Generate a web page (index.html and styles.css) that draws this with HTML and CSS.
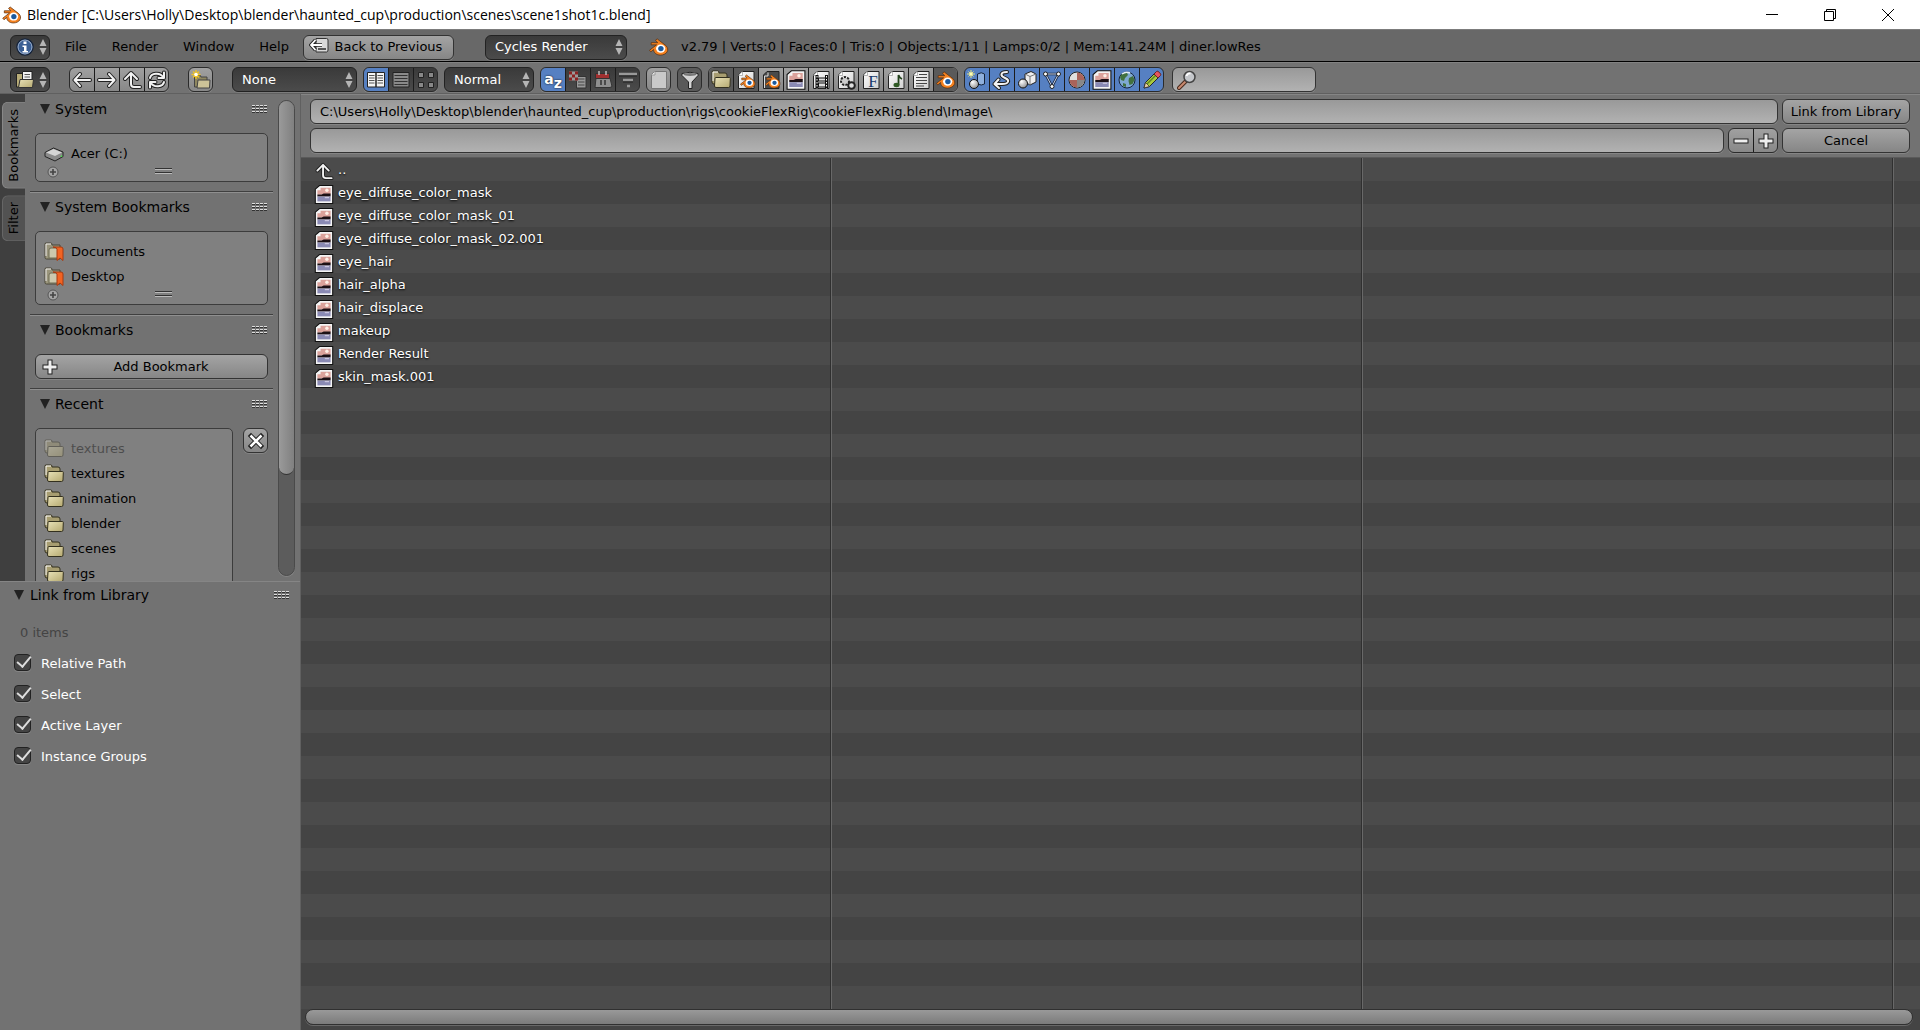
FILE: index.html
```html
<!DOCTYPE html>
<html lang="en">
<head>
<meta charset="utf-8">
<title>Blender</title>
<link rel="stylesheet" href="styles.css">
</head>
<body>
<svg class="sprite" width="0" height="0" aria-hidden="true">
  <defs>
    <linearGradient id="g-folder" x1="0" y1="0" x2="1" y2="1"><stop offset="0" stop-color="#e9e2b8"/><stop offset="1" stop-color="#b5a970"/></linearGradient>
    <linearGradient id="g-page" x1="0" y1="0" x2="1" y2="1"><stop offset="0" stop-color="#ffffff"/><stop offset="1" stop-color="#cfcfcf"/></linearGradient>
    <radialGradient id="g-ball" cx=".35" cy=".3" r=".8"><stop offset="0" stop-color="#fff"/><stop offset="1" stop-color="#888"/></radialGradient>
  </defs>
  <symbol id="logo" viewBox="1 2 18.500 17">
    <path d="M1.500 13.500 8 8.500H3V6.500h6L7 4.200 8.600 3l8 6.200c4 4 .6 8.800-5 8.800-4 0-6.500-2.600-6.300-5.200L2.700 15z" fill="#f58220" stroke="#5a3010" stroke-width=".7"/>
    <ellipse cx="11.800" cy="12" rx="4.300" ry="3.800" fill="#fff"/><circle cx="12" cy="12" r="2.500" fill="#1c5a9e"/>
  </symbol>
  <symbol id="updown" viewBox="0 0 8 18"><path d="M4 1 7.500 8h-7zM4 17 .5 10h7z" fill="#b5b5b5"/></symbol>
  <symbol id="info" viewBox="0 0 20 20"><circle cx="10" cy="10" r="8" fill="#3b5f94" stroke="#15233a" stroke-width="1.500"/><circle cx="10" cy="10" r="7" fill="none" stroke="#9fb4d2"/><path d="M8.500 4.500h3v2.500h-3zM7.500 8.500h4V14H13v1.500H7.500V14H9v-4H7.500z" fill="#fff"/></symbol>
  <symbol id="back" viewBox="0 0 20 20"><path d="M7 1.500h10.500q1.500 0 1.500 1.500v10q0 2-1.500 2H7z" fill="#d9d9d9" stroke="#333"/><path d="M9 12h8" stroke="#555" stroke-width="2"/><path d="M6.500 3 2 8l4.500 5M2.500 8H13" fill="none" stroke="#222" stroke-width="3.600"/><path d="M6.500 3 2 8l4.500 5M2.500 8H13" fill="none" stroke="#fff" stroke-width="1.800"/></symbol>
  <symbol id="filebrowser" viewBox="0 0 20 20"><path d="M1.500 17V3.500H7l1 2h4V17z" fill="#b9ad78" stroke="#222"/><path d="M7.500 1.500H17V13H7.500z" fill="#f2f2f2" stroke="#222"/><path d="M9.500 4.500H15m-5.500 2.500H15" stroke="#555"/><path d="M5 9.500h13.500l-1 8H3.500z" fill="url(#g-folder)" stroke="#333"/></symbol>
  <symbol id="left" viewBox="0 0 20 20"><path class="ink" d="M8 4 2.500 10 8 16M3 10h15"/><path class="lit" d="M8 4 2.500 10 8 16M3 10h15"/></symbol>
  <symbol id="right" viewBox="0 0 20 20"><path class="ink" d="m12 4 5.500 6-5.500 6M17 10H2"/><path class="lit" d="m12 4 5.500 6-5.500 6M17 10H2"/></symbol>
  <symbol id="up" viewBox="0 0 20 20"><path class="ink" d="m3 9 6-6 6 6M9 4v10q0 3 3 3h6"/><path class="lit" d="m3 9 6-6 6 6M9 4v10q0 3 3 3h6"/></symbol>
  <symbol id="reload" viewBox="0 0 20 20"><path class="ink" d="M3 8c1-5 10-6 13-1M11.500 8H17V2.500M17 12c-1 5-10 6-13 1M8.500 12H3v5.500"/><path class="lit" d="M3 8c1-5 10-6 13-1M11.500 8H17V2.500M17 12c-1 5-10 6-13 1M8.500 12H3v5.500"/></symbol>
  <symbol id="newfolder" viewBox="0 0 20 20"><path d="M3.500 17V5H9l1 2h6v10z" fill="#8f875f" stroke="#444"/><path d="M7 10h12l-.5 8H6z" fill="#cdc398" stroke="#444"/><path d="M5 0v9M.5 4.500h9M2 1.500l6 6M8 1.500l-6 6" stroke="#f2c522" stroke-width="1.400"/><circle cx="5" cy="4.500" r="1.800" fill="#fff"/></symbol>
  <symbol id="folder" viewBox="0 0 20 20"><path d="M1 2q0-1 1-1h5q1 0 1 2h6q2 0 2 2v9H3q-2 0-2-2z" fill="#a79d70" stroke="#33301f"/><path d="M2 11V2h5" fill="none" stroke="#fff"/><path d="M5 7.500h13.500q.8 0 .8 1l-.3 7.500q0 1.500-1.500 1.500H5q-1.500 0-1.500-1.500l.5-7.500q0-1 1-1z" fill="url(#g-folder)" stroke="#33301f"/></symbol>
  <symbol id="bookfolder" viewBox="0 0 20 20"><path d="M1 2q0-1 1-1h5q1 0 1 2h8v14H2.500Q1 17 1 15.500z" fill="#9a957c" stroke="#4a4738"/><path d="M2 14V2h5" fill="none" stroke="#eee"/><path d="M5 16V8q0-2 2-2h10v10z" fill="#ccc8ad" stroke="#6d6a55"/><path d="M9 5h8q2 0 2 2v11.500l-3-2.500-3 2.500V7q0-1.500-4-2z" fill="#f26322" stroke="#a63a10"/></symbol>
  <symbol id="longlist" viewBox="0 0 20 20"><path d="M1.500 2.500H10V17H1.500zM10 2.500h8.500V17H10z" fill="#f4f4f4" stroke="#222"/><path d="M3 5.500h5.500M3 8h5.500M3 10.500h5.500M3 13h5.500m3-7.500H17M11.500 8H17m-5.500 2.500H17M11.500 13H17" stroke="#555"/></symbol>
  <symbol id="lines" viewBox="0 0 20 20"><path d="M2 2.500h16V17H2z" fill="#8a8a8a" stroke="#222"/><path d="M3.500 5.500h13m-13 3h13m-13 3h13m-13 3h13" stroke="#333"/></symbol>
  <symbol id="thumbs" viewBox="0 0 20 20"><path d="M2.500 2.500h5v5h-5zm10 0h5v5h-5zm-10 10h5v5h-5zm10 0h5v5h-5z" fill="#888" stroke="#222"/></symbol>
  <symbol id="byext" viewBox="0 0 20 20"><path d="M8.500 6.500H18V18H8.500z" fill="#999" stroke="#333"/><path d="M10 9h6.500M10 12h6.500M10 15h6.500" stroke="#444"/><path d="M1 1.500h9v9H1z" fill="#999"/><path d="M1 1.500h3v3H1zm6 0h3v3H7zm-3 3h3v3H4zm-3 3h3v3H1zm6 0h3v3H7z" fill="#8c2222"/></symbol>
  <symbol id="calendar" viewBox="0 0 20 20"><path d="m3 8-1 9.500h15l2-1-2-8.500z" fill="#8f8f8f" stroke="#333"/><path d="M2.500 3.500h14v5h-14z" fill="#a03030" stroke="#333"/><path d="M6 1v4m7-4v4" stroke="#bbb" stroke-width="1.500"/><path d="M8 10v5m4-5v5" stroke="#333" stroke-width="1.500"/></symbol>
  <symbol id="size" viewBox="0 0 20 20"><path d="M1 4h18M5 10h10M9 16h3" stroke="#999" stroke-width="2.500"/><path d="M1 6h18M5 12h10" stroke="#222"/></symbol>
  <symbol id="blank" viewBox="0 0 20 20"><path d="M5.500 1.500H17.500v17h-15V4.500z" fill="#c9c9c9" stroke="#777"/><path d="M2.500 5H6V1.500" fill="#eee" stroke="#999"/></symbol>
  <symbol id="funnel" viewBox="0 0 20 20"><path d="M2 3.500q8-2.500 16 0v2L12 12v6.500H8.500V12L2 5.500z" fill="#d4d4d4" stroke="#222"/><ellipse cx="10" cy="4.500" rx="6.500" ry="1.400" fill="#777"/></symbol>
  <symbol id="page" viewBox="0 0 20 20"><path d="M6 1.500h12v17H2.500V5z" fill="url(#g-page)" stroke="#222"/><path d="M2.500 5.500H6.500v-4" fill="#fff" stroke="#999" stroke-width=".7"/></symbol>
  <symbol id="blend" viewBox="0 0 20 20"><use href="#page"/><use href="#logo" x="4" y="4" width="16" height="15"/></symbol>
  <symbol id="backup" viewBox="0 0 20 20"><path d="M6 1.500h12v17H2.500V5z" fill="#4a4a4a" stroke="#222"/><path d="M3.500 18V6H7V2.500" fill="none" stroke="#ddd"/><use href="#logo" x="4" y="4" width="16" height="15"/></symbol>
  <symbol id="image" viewBox="1 1 18.500 18"><path d="M6 1.500h12.500v17H2V5z" fill="#f4f4f4" stroke="#111"/><path d="M4 6h3V3.500h9.500V10H4z" fill="#dba29b"/><circle cx="13" cy="6" r="1.600" fill="#fff0e6"/><path d="M4 10h4l2-1h6.500v3H4z" fill="#1c1015"/><path d="M4 12h12.500v4.500H4z" fill="#8a8ab4"/><path d="M11 13h4" stroke="#d4cfe6"/></symbol>
  <symbol id="movie" viewBox="0 0 20 20"><use href="#page"/><path d="M6 5v13.500M15.500 5v13.500" stroke="#111" stroke-width="3"/><path d="M7.500 8h7v3h-7zm0 5h7v4h-7z" fill="#ddd" stroke="#111"/><path d="M6 6v12.500M15.500 6v12.500" stroke="#fff" stroke-dasharray="1.500 1.500"/></symbol>
  <symbol id="script" viewBox="0 0 20 20"><use href="#page"/><circle cx="9" cy="11" r="3.500" fill="none" stroke="#222" stroke-width="3" stroke-dasharray="2 1"/><circle cx="9" cy="11" r="3" fill="#ccc"/><circle cx="15.500" cy="15.500" r="3.300" fill="#ddd" stroke="#222" stroke-width="2"/></symbol>
  <symbol id="sound" viewBox="0 0 20 20"><use href="#page"/><path d="M12.500 15V5q1 3 3.500 4" fill="none" stroke="#23421c" stroke-width="1.800"/><ellipse cx="10.500" cy="15" rx="3" ry="2.200" fill="#2f5a24"/></symbol>
  <symbol id="text" viewBox="0 0 20 20"><use href="#page"/><path d="M8 4.500h8M5 7.500h11M5 10.500h11M5 13.500h11M5 16h8" stroke="#444"/></symbol>
  <symbol id="objects" viewBox="0 0 20 20"><path d="M10.500 4q4-2.500 7 0v10q-3 2-7 0z" fill="#8fb0dd" stroke="#15233a"/><circle cx="7" cy="14" r="4.500" fill="url(#g-ball)" stroke="#111"/><path d="M4 0v8M0 4h8M1.500 1.500l5 5M6.500 1.500l-5 5" stroke="#e8e27a"/><circle cx="4" cy="4" r="1.700" fill="#ffffb0"/></symbol>
  <symbol id="curve" viewBox="0 0 20 20"><path class="ink" d="M15 2c-7 0-7 4-2 6s4 6-3 6H2.500M6.500 9.500 2.500 14l4.500 4"/><path class="lit" d="M15 2c-7 0-7 4-2 6s4 6-3 6H2.500M6.500 9.500 2.500 14l4.500 4"/></symbol>
  <symbol id="geometry" viewBox="0 0 20 20"><path d="m8 4 6-2.500L19 4v8l-6 3-5-3z" fill="#eee" stroke="#222"/><path d="m8 4 5 2.500V15m0-8.500L19 4" fill="none" stroke="#777"/><circle cx="6" cy="13.500" r="4.500" fill="url(#g-ball)" stroke="#111"/></symbol>
  <symbol id="mesh" viewBox="0 0 20 20"><path d="M3.500 4h13L10 16.500z" fill="none" stroke="#17243c" stroke-width="2.500"/><path d="M3.500 4h13L10 16.500z" fill="none" stroke="#ccd8ee"/><g fill="#fff" stroke="#222"><circle cx="3.500" cy="4" r="2"/><circle cx="16.500" cy="4" r="2"/><circle cx="10" cy="16.500" r="2"/></g></symbol>
  <symbol id="material" viewBox="0 0 20 20"><circle cx="10" cy="10" r="8" fill="#dfdfdf" stroke="#222"/><path d="M10 10V2.500a7.500 7.500 0 0 1 7.500 7.500zM10 10v7.500A7.500 7.500 0 0 1 2.500 10z" fill="#a9635a"/><path d="M10 10h7.500a7.500 7.500 0 0 1-7.500 7.500z" fill="#888"/></symbol>
  <symbol id="world" viewBox="0 0 20 20"><circle cx="10" cy="10" r="8" fill="#7fa9d2" stroke="#15233a"/><path d="M4 5q3-3 6-2l1 2-3 3-1 3-3-1-1-3zm8 3 4-2 1.500 4-2 4-3 1-1-4zM6 13l3 1v3l-3-1z" fill="#42713f"/><path d="M5 4q4-3 8-1" stroke="#e5eef5" stroke-width="1.500" fill="none"/></symbol>
  <symbol id="pencil" viewBox="0 0 20 20"><path d="m2 18 1.500-5.500L12 4l4 4-8.500 8.500z" fill="#a8c93e" stroke="#223"/><path d="m3.500 12.500 4 4L2 18z" fill="#e8cfa0" stroke="#222" stroke-width=".7"/><path d="m5 14 8.500-8.500" stroke="#5d8420" stroke-width="1.500"/><path d="m12 4 2.500-2.500q1-1 3 1t1 3L16 8z" fill="#e6555c" stroke="#622"/></symbol>
  <symbol id="lens" viewBox="0 0 20 20"><path d="M9 11 2 18" stroke="#4a2b1e" stroke-width="4" stroke-linecap="round"/><path d="m8 12-6 6" stroke="#c98a70" stroke-width="2" stroke-linecap="round"/><circle cx="12.500" cy="7" r="5.500" fill="#c5c7cb" stroke="#444" stroke-width="1.500"/><path d="M9.500 6q1-3 4-2.500" stroke="#fff" stroke-width="1.800" fill="none"/></symbol>
  <symbol id="disk" viewBox="0 0 20 20"><path d="M1 8.500 9.500 4 19 8v4.500L11 17l-10-4.500z" fill="#8a8a8a" stroke="#222"/><path d="M2 8.500 9.500 5 18 8.500 11 12z" fill="#d5d5d5"/><path d="M17.500 11.500v1.500" stroke="#4be04b" stroke-width="1.500"/></symbol>
  <symbol id="plus" viewBox="0 0 20 20"><path d="M10 2.500v15M2.500 10h15" stroke="#222" stroke-width="5"/><path d="M10 3.500v13M3.500 10h13" stroke="#eee" stroke-width="3"/></symbol>
  <symbol id="minus" viewBox="0 0 20 20"><path d="M2.500 10h15" stroke="#222" stroke-width="5"/><path d="M3.500 10h13" stroke="#eee" stroke-width="3"/></symbol>
  <symbol id="cross" viewBox="0 0 20 20"><path d="m5 5 10 10M15 5 5 15" stroke="#222" stroke-width="4.500" stroke-linecap="square"/><path d="m4.500 4.500 11 11m0-11-11 11" stroke="#fff" stroke-width="2.500"/></symbol>
  <symbol id="addmini" viewBox="0 0 12 12"><circle cx="6" cy="6" r="5" fill="#a5a5a5" stroke="#555"/><path d="M6 3v6M3 6h6" stroke="#444" stroke-width="1.600"/></symbol>
  <symbol id="tri" viewBox="0 0 10 10"><path d="M0 0h10L5 10z" fill="#222"/></symbol>
  <symbol id="grip" viewBox="0 0 15 8"><path d="M0 .5h15M0 3.500h15M0 6.500h15" stroke="#ddd" stroke-dasharray="3 1"/><path d="M0 1.500h15M0 4.500h15M0 7.500h15" stroke="#333" stroke-dasharray="3 1"/></symbol>
</svg>

<header class="titlebar">
  <svg class="app"><use href="#logo"/></svg>
  <h1>Blender [C:\Users\Holly\Desktop\blender\haunted_cup\production\scenes\scene1shot1c.blend]</h1>
  <button aria-label="Minimize"><svg viewBox="0 0 12 12"><path d="M0 5.500h12"/></svg></button>
  <button aria-label="Restore"><svg viewBox="0 0 12 12"><path d="M.5 2.500h9v9h-9zM2.500 2V.5h9v9H10"/></svg></button>
  <button aria-label="Close"><svg viewBox="0 0 12 12"><path d="m0 0 12 12M12 0 0 12"/></svg></button>
</header>

<nav class="bar menubar">
  <button class="dark editor" aria-label="Editor type: Info"><svg class="i"><use href="#info"/></svg><svg class="ud"><use href="#updown"/></svg></button>
  <div class="menus"><button>File</button><button>Render</button><button>Window</button><button>Help</button></div>
  <button class="btn back"><svg class="i"><use href="#back"/></svg>Back to Previous</button>
  <div class="drop engine"><select aria-label="Render engine"><option>Cycles Render</option></select><svg class="ud"><use href="#updown"/></svg></div>
  <svg class="i stat-logo"><use href="#logo"/></svg>
  <p>v2.79 | Verts:0 | Faces:0 | Tris:0 | Objects:1/11 | Lamps:0/2 | Mem:141.24M | diner.lowRes</p>
</nav>

<div class="bar toolbar" role="toolbar">
  <button class="dark editor" aria-label="Editor type: File Browser"><svg class="i"><use href="#filebrowser"/></svg><svg class="ud"><use href="#updown"/></svg></button>
  <div class="group lightg nav">
    <button aria-label="Previous folder"><svg class="i"><use href="#left"/></svg></button><button aria-label="Next folder"><svg class="i"><use href="#right"/></svg></button><button aria-label="Parent folder"><svg class="i"><use href="#up"/></svg></button><button aria-label="Refresh"><svg class="i"><use href="#reload"/></svg></button>
  </div>
  <div class="group lightg new"><button aria-label="New folder"><svg class="i"><use href="#newfolder"/></svg></button></div>
  <div class="drop recursion"><select aria-label="Recursion"><option>None</option></select><svg class="ud"><use href="#updown"/></svg></div>
  <div class="group darkg">
    <button class="on" aria-label="Long list"><svg class="i"><use href="#longlist"/></svg></button><button aria-label="Short list"><svg class="i"><use href="#lines"/></svg></button><button aria-label="Thumbnails"><svg class="i"><use href="#thumbs"/></svg></button>
  </div>
  <div class="drop dsize"><select aria-label="Display size"><option>Normal</option></select><svg class="ud"><use href="#updown"/></svg></div>
  <div class="group darkg">
    <button class="on az" aria-label="Sort by name">a<sub>z</sub></button><button aria-label="Sort by extension"><svg class="i"><use href="#byext"/></svg></button><button aria-label="Sort by time"><svg class="i"><use href="#calendar"/></svg></button><button aria-label="Sort by size"><svg class="i"><use href="#size"/></svg></button>
  </div>
  <div class="group lightg"><button aria-label="Show hidden"><svg class="i"><use href="#blank"/></svg></button></div>
  <div class="group midg"><button aria-label="Use filter"><svg class="i"><use href="#funnel"/></svg></button></div>
  <div class="group lightg types">
    <button class="off" aria-label="Folders"><svg class="i"><use href="#folder"/></svg></button><button class="off" aria-label="Blend files"><svg class="i"><use href="#blend"/></svg></button><button aria-label="Backups"><svg class="i"><use href="#backup"/></svg></button><button aria-label="Images"><svg class="i"><use href="#image"/></svg></button><button aria-label="Movies"><svg class="i"><use href="#movie"/></svg></button><button aria-label="Scripts"><svg class="i"><use href="#script"/></svg></button><button class="font" aria-label="Fonts"><svg class="i"><use href="#page"/></svg><span>F</span></button><button aria-label="Sounds"><svg class="i"><use href="#sound"/></svg></button><button aria-label="Texts"><svg class="i"><use href="#text"/></svg></button><button class="off" aria-label="Blender IDs"><svg class="i"><use href="#logo"/></svg></button>
  </div>
  <div class="group blueg">
    <button aria-label="Objects"><svg class="i"><use href="#objects"/></svg></button><button aria-label="Animations"><svg class="i"><use href="#curve"/></svg></button><button aria-label="Geometry"><svg class="i"><use href="#geometry"/></svg></button><button aria-label="Meshes"><svg class="i"><use href="#mesh"/></svg></button><button aria-label="Materials"><svg class="i"><use href="#material"/></svg></button><button aria-label="Image data"><svg class="i"><use href="#image"/></svg></button><button aria-label="Worlds"><svg class="i"><use href="#world"/></svg></button><button aria-label="Misc"><svg class="i"><use href="#pencil"/></svg></button>
  </div>
  <label class="search"><svg class="i"><use href="#lens"/></svg><input type="search" aria-label="Search"></label>
</div>

<div class="body">
  <aside>
    <div class="tools">
      <div class="tabs"><button class="active">Bookmarks</button><button>Filter</button></div>
      <div class="panels">
        <section>
          <h2><svg class="tri"><use href="#tri"/></svg>System<svg class="grip"><use href="#grip"/></svg></h2>
          <div class="box">
            <button class="row"><svg class="i"><use href="#disk"/></svg>Acer (C:)</button>
            <div class="foot"><svg><use href="#addmini"/></svg><i></i></div>
          </div>
        </section>
        <section>
          <h2><svg class="tri"><use href="#tri"/></svg>System Bookmarks<svg class="grip"><use href="#grip"/></svg></h2>
          <div class="box">
            <button class="row"><svg class="i"><use href="#bookfolder"/></svg>Documents</button>
            <button class="row"><svg class="i"><use href="#bookfolder"/></svg>Desktop</button>
            <div class="foot"><svg><use href="#addmini"/></svg><i></i></div>
          </div>
        </section>
        <section>
          <h2><svg class="tri"><use href="#tri"/></svg>Bookmarks<svg class="grip"><use href="#grip"/></svg></h2>
          <button class="btn add"><svg class="i"><use href="#plus"/></svg><span>Add Bookmark</span></button>
        </section>
        <section>
          <h2><svg class="tri"><use href="#tri"/></svg>Recent<svg class="grip"><use href="#grip"/></svg></h2>
          <div class="recent">
            <div class="box">
              <button class="row" disabled><svg class="i"><use href="#folder"/></svg>textures</button>
              <button class="row"><svg class="i"><use href="#folder"/></svg>textures</button>
              <button class="row"><svg class="i"><use href="#folder"/></svg>animation</button>
              <button class="row"><svg class="i"><use href="#folder"/></svg>blender</button>
              <button class="row"><svg class="i"><use href="#folder"/></svg>scenes</button>
              <button class="row"><svg class="i"><use href="#folder"/></svg>rigs</button>
            </div>
            <button class="btn clear" aria-label="Clear recent"><svg class="i"><use href="#cross"/></svg></button>
          </div>
        </section>
      </div>
      <div class="vscroll"><div></div></div>
    </div>
    <section class="operator">
      <h2><svg class="tri"><use href="#tri"/></svg>Link from Library<svg class="grip"><use href="#grip"/></svg></h2>
      <p>0 items</p>
      <label><input type="checkbox" checked>Relative Path</label>
      <label><input type="checkbox" checked>Select</label>
      <label><input type="checkbox" checked>Active Layer</label>
      <label><input type="checkbox" checked>Instance Groups</label>
    </section>
  </aside>

  <main>
    <div class="paths">
      <input class="field" aria-label="Directory" value="C:\Users\Holly\Desktop\blender\haunted_cup\production\rigs\cookieFlexRig\cookieFlexRig.blend\Image\">
      <button class="btn">Link from Library</button>
      <div class="name">
        <input class="field" aria-label="File name">
        <div class="group lightg"><button aria-label="Decrease"><svg class="i"><use href="#minus"/></svg></button><button aria-label="Increase"><svg class="i"><use href="#plus"/></svg></button></div>
      </div>
      <button class="btn">Cancel</button>
    </div>
    <div class="list">
      <ul>
        <li><svg class="i"><use href="#up"/></svg>..</li>
        <li><svg class="i"><use href="#image"/></svg>eye_diffuse_color_mask</li>
        <li><svg class="i"><use href="#image"/></svg>eye_diffuse_color_mask_01</li>
        <li><svg class="i"><use href="#image"/></svg>eye_diffuse_color_mask_02.001</li>
        <li><svg class="i"><use href="#image"/></svg>eye_hair</li>
        <li><svg class="i"><use href="#image"/></svg>hair_alpha</li>
        <li><svg class="i"><use href="#image"/></svg>hair_displace</li>
        <li><svg class="i"><use href="#image"/></svg>makeup</li>
        <li><svg class="i"><use href="#image"/></svg>Render Result</li>
        <li><svg class="i"><use href="#image"/></svg>skin_mask.001</li>
      </ul>
      <div class="hscroll"></div>
    </div>
  </main>
</div>
</body>
</html>
```
FILE: styles.css
```css
* { box-sizing: border-box; }
body {
  margin: 0;
  height: 100vh;
  display: flex;
  flex-direction: column;
  overflow: hidden;
  background: #727272;
  color: #000;
  font: 13px/16px "DejaVu Sans", sans-serif;
}
h1, h2, p, ul { margin: 0; padding: 0; font-weight: normal; }
button, input, select { font: inherit; color: inherit; margin: 0; padding: 0; border: 0; background: none; }
svg { display: block; flex: none; }
.sprite { position: absolute; }
.i { width: 20px; height: 20px; }
.ud { width: 8px; height: 18px; }
.ink, .lit { fill: none; stroke: #222; stroke-width: 4; stroke-linejoin: round; stroke-linecap: round; }
.lit { stroke: #f2f2f2; stroke-width: 2; }

/* window title */
.titlebar { display: flex; align-items: center; height: 29px; flex: none; padding-left: 2px; background: #fff; }
.titlebar .app { width: 20px; height: 18px; margin-right: 5px; }
.titlebar h1 { flex: 1; font: 14px/20px "Open Sans", "Noto Sans", sans-serif; white-space: nowrap; }
.titlebar button { width: 58px; height: 29px; display: grid; place-items: center; }
.titlebar button svg { width: 12px; height: 12px; fill: none; stroke: #000; }
.titlebar button:last-child { margin-right: 3px; }

/* header bars */
.bar { display: flex; align-items: center; flex: none; padding: 3px 0 0 10px; }
.menubar { height: 33px; background: #686868; border-top: 1px solid #7c7c7c; border-bottom: 1px solid #000; }
.toolbar { height: 32px; gap: 6px; border-top: 1px solid #828282; border-bottom: 1px solid #606060; }
.dark, .drop select {
  height: 25px;
  border: 1px solid #222;
  border-radius: 6px;
  background: linear-gradient(#3a3a3a, #4b4b4b);
  box-shadow: 0 1px 0 #7c7c7c;
}
.editor { display: flex; align-items: center; width: 40px; padding-left: 4px; gap: 4px; }
.menus { display: flex; gap: 25px; margin-left: 15px; }
.btn {
  height: 25px;
  border: 1px solid #333;
  border-radius: 6px;
  background: linear-gradient(#a4a4a4, #868686);
  box-shadow: 0 1px 0 #858585;
  display: flex;
  align-items: center;
  justify-content: center;
}
.back { width: 151px; gap: 6px; margin-left: 14px; padding-right: 6px; }
.drop { display: grid; align-items: center; }
.drop > * { grid-area: 1 / 1; }
.drop select { appearance: none; width: 100%; padding-left: 9px; color: #fff; }
.drop .ud { justify-self: end; margin-right: 4px; pointer-events: none; }
.engine { width: 142px; margin-left: 31px; }
.stat-logo { margin: 0 12px 0 22px; }
.menubar p { white-space: nowrap; }

.group { display: flex; border: 1px solid #2b2b2b; border-radius: 6px; overflow: hidden; box-shadow: 0 1px 0 #858585; }
.group button { width: 25px; height: 23px; display: grid; place-items: center; }
.group button:first-child, .group button:last-child { width: 24px; }
.group button:only-child { width: 23px; }
.group button + button { border-left: 1px solid #1c1c1c; }
.group .az { display: block; color: #fff; font-weight: bold; font-size: 14px; line-height: 14px; text-shadow: 0 0 2px #000; }
.az sub { line-height: 8px; font-size: 14px; }
.font > * { grid-area: 1 / 1; }
.font span { margin: 4px 0 0 4px; font: 17px/16px "Liberation Serif", serif; color: #173a6b; }
.lightg { background: linear-gradient(#a0a0a0, #888); }
.lightg .off, .midg { background: #5a5a5a; }
.darkg { background: linear-gradient(#3a3a3a, #4b4b4b); }
.darkg .on, .blueg { background: #5680c2; }
.nav, .new { margin-left: 13px; }
.recursion { width: 125px; margin-left: 13px; }
.dsize { width: 90px; }
.search, .field {
  height: 25px;
  border: 1px solid #333;
  border-radius: 6px;
  background: linear-gradient(#999, #b2b2b2);
  box-shadow: 0 1px 0 #858585;
}
.search { display: flex; align-items: center; width: 144px; margin-left: 2px; padding-left: 4px; }
.search input { flex: 1; min-width: 0; outline: 0; appearance: none; }

.body { flex: 1; min-height: 0; display: grid; grid-template-columns: 301px 1fr; }

/* left column */
aside { display: grid; grid-template-rows: 52% minmax(0, 1fr); min-height: 0; border-right: 1px solid #606060; }
.tools { display: flex; overflow: hidden; }
.tabs { width: 25px; flex: none; background: #3f3f3f; padding: 8px 0 0 2px; display: flex; flex-direction: column; gap: 6px; }
.tabs button {
  width: 23px;
  padding: 6px 3px;
  writing-mode: vertical-rl;
  transform: rotate(180deg);
  border: 1px solid #666;
  border-left: 0;
  border-radius: 0 6px 6px 0;
  background: #525252;
}
.tabs .active { background: #727272; border-color: #888; }
.panels { width: 249px; padding: 0 1px 0 5px; flex: none; }
.panels section { padding-bottom: 9px; }
.panels section > :not(h2) { margin: 0 5px; }
h2 { display: flex; align-items: center; font-size: 14px; line-height: 18px; }
.panels h2 { height: 40px; padding: 0 6px 9px 10px; border-top: 1px solid #3f3f3f; box-shadow: inset 0 1px 0 #8f8f8f; }
.panels section:first-child h2 { height: 39px; border-top: 0; box-shadow: none; }
.tri { width: 10px; height: 10px; margin-right: 5px; }
.grip { width: 15px; height: 8px; margin-left: auto; }
.box { border: 1px solid #3c3c3c; border-radius: 5px; background: #808080; padding-top: 7px; }
.row { display: flex; align-items: center; gap: 7px; width: 100%; height: 25px; padding-left: 8px; text-align: left; }
.row:disabled { opacity: .4; }
.foot { display: flex; height: 15px; padding-left: 11px; }
.foot svg { width: 12px; height: 12px; }
.foot i { width: 17px; height: 5px; margin: 2px 0 0 96px; border: solid #333; border-width: 1px 0; box-shadow: 0 1px 0 #bbb, inset 0 1px 0 #bbb; }
.panels .add { width: 233px; padding: 0 5px 0 4px; }
.add span { flex: 1; }
.recent { display: flex; align-items: flex-start; justify-content: space-between; }
.recent .box { width: 198px; padding-bottom: 15px; }
.clear { width: 25px; }
.vscroll { width: 17px; margin: 6px 0 5px 4px; border: 1px solid #4a4a4a; border-radius: 9px; background: #5c5c5c; box-shadow: 0 1px 0 #858585; }
.vscroll div { height: 79%; border-radius: 8px; border-bottom: 1px solid #333; background: linear-gradient(90deg, #9a9a9a, #808080); }
.operator { border-top: 1px solid #858585; padding: 3px 11px 0 14px; overflow: hidden; }
.operator h2 { line-height: 20px; }
.operator .tri { margin-right: 6px; }
.operator p { margin: 20px 0 8px 6px; color: #444; }
.operator label { display: flex; align-items: center; gap: 10px; height: 31px; color: #fff; }
.operator input {
  appearance: none;
  width: 17px;
  height: 17px;
  border: 1px solid #222;
  border-radius: 4px;
  background: #444;
  box-shadow: 0 1px 0 #858585;
  display: grid;
  place-items: center;
  margin-bottom: 3px;
}
.operator input:checked::before { content: ""; width: 6px; height: 12px; border: solid #ddd; border-width: 0 2px 2px 0; transform: translate(1px, -3px) rotate(40deg); }

/* file list */
main { display: flex; flex-direction: column; min-width: 0; }
.paths { display: grid; grid-template-columns: 1fr 128px; gap: 4px; padding: 4px 10px 4px 9px; border-top: 1px solid #858585; border-bottom: 1px solid #5a5a5a; }
.name { display: flex; gap: 4px; }
.field { width: 100%; min-width: 0; padding: 0 9px; outline: 0; }
.name .group { flex: 0 0 50px; }
.list {
  flex: 1;
  display: flex;
  flex-direction: column;
  padding: 0 7px 5px 4px;
  background: repeating-linear-gradient(#4b4b4b 0 23px, #444 23px 46px);
}
.list ul {
  flex: 1;
  list-style: none;
  margin-right: 15px;
  background: repeating-linear-gradient(90deg, transparent 0 525px, #303030 525px 526px, #686868 526px 527px, transparent 527px 531px);
  color: #fff;
}
.list li { display: flex; align-items: center; height: 23px; gap: 4px; padding-left: 9px; text-shadow: 0 1px 2px #000; }
.list .i { margin-top: 4px; height: 19px; }
.hscroll { flex: none; height: 16px; border: 1px solid #303030; border-radius: 8px; background: linear-gradient(#999, #7b7b7b); box-shadow: 0 1px 0 #686868; }
```
